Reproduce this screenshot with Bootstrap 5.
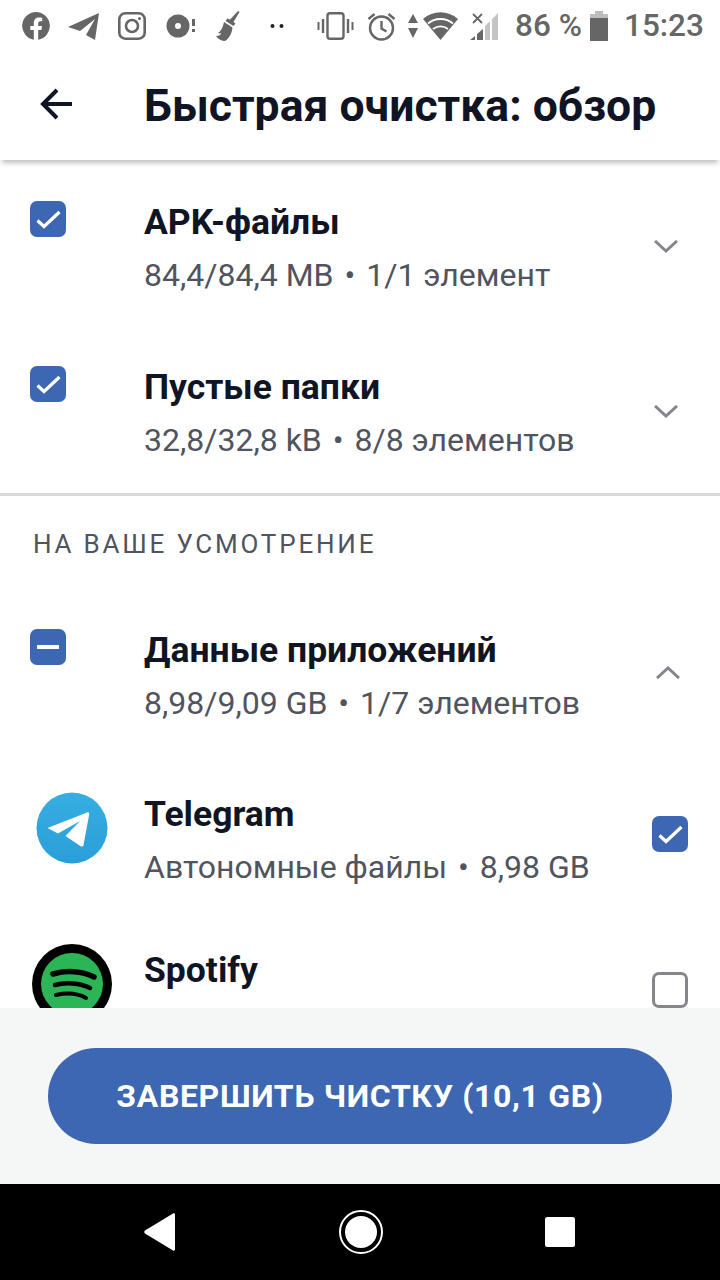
<!DOCTYPE html>
<html lang="ru">
<head>
  <meta charset="UTF-8" />
  <meta name="viewport" content="width=device-width, initial-scale=1.0"/>
  <title>Быстрая очистка: обзор</title>
  <link href="https://cdn.jsdelivr.net/npm/bootstrap@5.3.2/dist/css/bootstrap.min.css" rel="stylesheet" />
  <style>
    html, body { margin: 0; height: 1280px; overflow: hidden; }
    body { background: #fff; font-family: Roboto, "Liberation Sans", sans-serif; color: #0f1524; }
    .phone { width: 720px; height: 1280px; }
    .status-bar { height: 52px; color: #666; font-size: 31.5px; font-weight: 500; line-height: 52px; flex: none; }
    .status-bar svg { flex: none; }
    .si-fb { margin-left: 22px; } .si-tg { margin-left: 18px; } .si-ig { margin-left: 18px; }
    .si-disc { margin-left: 20px; } .si-broom { margin-left: 20px; } .si-dots { margin-left: 30px; }
    .si-vib { margin-left: 33px; } .si-alarm { margin-left: 13px; } .si-ud { margin-left: 12px; }
    .si-wifi { margin-left: 5px; } .si-sig { margin-left: 12px; } .si-pct { margin-left: 17px; width: 66px; white-space: nowrap; }
    .si-bat { margin-left: 9px; } .si-time { margin-left: 16px; }
    .app-head { height: 108px; box-shadow: 0 5px 5px -2px rgba(0,0,0,.25); position: relative; z-index: 2; flex: none; }
    .back-icon { margin-left: 40px; margin-right: 72px; margin-bottom: 5px; }
    .head-title { font-size: 44.5px; font-weight: 700; line-height: 1; margin: 0; color: #0f1524; }
    .scroll-area { flex: 1 1 auto; overflow: hidden; min-height: 0; }
    .clean-row { height: 164px; padding-left: 30px; }
    .clean-row.first-row { height: 165px; }
    .clean-row.last-row { height: 168px; }
    .app-row { height: 156px; padding-left: 30px; }
    .chk { width: 36px; height: 36px; border-radius: 7px; flex: none; background: #3d66b3; display: flex; align-items: center; justify-content: center; }
    .chk-empty { background: #fff; border: 3px solid #85868d; }
    .chk-slot { width: 114px; flex: none; padding-top: 41px; }
    .txt-col { flex: 1 1 auto; min-width: 0; padding-top: 42px; }
    .item-name { font-size: 35.5px; font-weight: 700; line-height: 40px; }
    .item-sub { font-size: 32px; line-height: 40px; margin-top: 13px; color: #50545e; white-space: nowrap; }
    .dot-sep { margin: 0 3px; }
    .end-slot { width: 72px; flex: none; padding: 80px 0 0 6px; }
    .end-slot.is-open { padding: 78px 0 0 8px; }
    .end-slot svg { display: block; }
    .end-box { width: 72px; flex: none; padding: 64px 0 0 4px; }
    .divider-line { height: 3px; background: #d9d9db; }
    .sec-label { font-size: 26px; letter-spacing: 2.8px; color: #50545e; padding: 33px 0 0 33px; height: 92px; line-height: 30px; }
    .app-icon-slot { width: 114px; flex: none; }
    .app-icon-slot svg { display: block; }
    .tg-slot { padding: 40px 0 0 6px; }
    .sp-slot { padding: 36px 0 0 2px; }
    .foot-bar { height: 176px; background: #f5f6f6; flex: none; padding: 40px 48px; }
    .finish-btn { width: 624px; height: 96px; border-radius: 48px; background: #3d66b3; border: 0; color: #fff; font-size: 32px; font-weight: 700; letter-spacing: .66px; }
    .finish-btn:hover { background: #3d66b3; color: #fff; }
    .nav-bar { height: 96px; background: #000; flex: none; padding-left: 144px; padding-right: 145px; }
  </style>
</head>
<body>
  <div class="phone d-flex flex-column">
    <div class="status-bar d-flex align-items-center">
      <svg class="si-fb" width="28" height="28" viewBox="0 0 28 28"><path fill="#666" d="M14 0a14 14 0 0 0-2.200 27.800V18H8.300v-4h3.500v-3.100c0-3.500 2.100-5.400 5.300-5.400 1.500 0 3.100.3 3.100.3v3.400h-1.800c-1.700 0-2.200 1.100-2.200 2.200V14h3.800l-.6 4h-3.200v9.800A14 14 0 0 0 14 0z"/></svg>
      <svg class="si-tg" width="32" height="28" viewBox="0 0 32 28"><path fill="#666" d="M0 15 31 1l-4 27-9-5 9-16-15 12z"/></svg>
      <svg class="si-ig" width="28" height="28" viewBox="0 0 28 28" fill="none" stroke="#666" stroke-width="2.600"><rect x="1.300" y="1.300" width="25.400" height="25.400" rx="6"/><circle cx="14" cy="14" r="6"/><circle cx="21.500" cy="6.500" r="1.500" fill="#666" stroke="none"/></svg>
      <svg class="si-disc" width="30" height="24" viewBox="0 0 30 24"><circle cx="12" cy="12" r="11.500" fill="#666"/><circle cx="12" cy="12" r="3" fill="#fff"/><path fill="#666" d="M26 5h3v7h-3zM26 15h3v3h-3z"/></svg>
      <svg class="si-broom" width="24" height="30" viewBox="0 0 24 30"><path fill="#666" d="M22 0l1.500 1-6 10 2 1.500-2 2.500-8-5 2-2.500 2.500 1zM8 11l8.500 5.500C16 22 13 28 9 30c-3 0-7-1.500-9-5 3 0 5-1 5-3-1 .5-2 .5-3 0 3-2 5-6 6-11z"/></svg>
      <svg class="si-dots" width="14" height="6" viewBox="0 0 14 6"><circle cx="2.500" cy="3" r="2" fill="#222"/><circle cx="11.500" cy="3" r="2" fill="#222"/></svg>
      <svg class="si-vib" width="37" height="28" viewBox="0 0 37 28" fill="none" stroke="#666"><rect x="10.500" y="1.200" width="16" height="25.600" rx="2.500" stroke-width="2.400"/><path stroke-width="2.400" d="M6 7v14M31 7v14"/><path stroke-width="2" d="M1.500 10v8M35.500 10v8"/></svg>
      <svg class="si-alarm" width="29" height="29" viewBox="0 0 29 29" fill="none" stroke="#666" stroke-width="2.400"><circle cx="14.500" cy="16" r="11.500"/><path d="M14.500 9v7.500l5 3M1.500 7l6-5M27.500 7l-6-5"/></svg>
      <svg class="si-ud" width="10" height="24" viewBox="0 0 10 24"><path fill="#666" d="M5 0l5 9H0zM5 24l5-10H0z"/></svg>
      <svg class="si-wifi" width="35" height="28" viewBox="0 0 35 28"><path fill="#666" d="M17.500 28 0 7c10-9 25-9 35 0z"/><path stroke="#fff" stroke-width="1.800" fill="none" d="M5 11.500c7-6 18-6 25 0M10 17c4.500-3.500 10.500-3.500 15 0"/></svg>
      <svg class="si-sig" width="28" height="28" viewBox="0 0 28 28"><path fill="#c4c4c4" d="M28 1v27h-6V7zM20 9v19h-5V14z"/><path fill="#666" d="M13 17v11H7v-6zM5 24v4H0z"/><path stroke="#666" stroke-width="1.800" d="M3 2l9 9M12 2l-9 9"/></svg>
      <span class="si-pct">86 %</span>
      <svg class="si-bat" width="18" height="30" viewBox="0 0 18 30"><path fill="#bdbdbd" d="M5 0h8v3h5v4H0V3h5z"/><path fill="#666" d="M0 7h18v23H0z"/></svg>
      <span class="si-time">15:23</span>
    </div>

    <div class="app-head d-flex align-items-center bg-white">
      <svg class="back-icon" width="32" height="32" viewBox="0 0 32 32" fill="none" stroke="#0f1524" stroke-width="4"><path d="M32 16H3M17 2 3 16l14 14"/></svg>
      <h1 class="head-title">Быстрая очистка: обзор</h1>
    </div>

    <div class="scroll-area" id="scroll-list"></div>

    <div class="foot-bar">
      <button type="button" class="btn finish-btn d-flex align-items-center justify-content-center">ЗАВЕРШИТЬ ЧИСТКУ (10,1 GB)</button>
    </div>

    <div class="nav-bar d-flex align-items-center justify-content-between">
      <svg width="32" height="38" viewBox="0 0 32 38"><path fill="#fff" d="M31 1.500V36.500c0 1-1 1.500-2 1L1 20.500c-1-.6-1-2.400 0-3L29 .5c1-.5 2 0 2 1z"/></svg>
      <svg width="44" height="44" viewBox="0 0 44 44"><circle cx="22" cy="22" r="21" fill="none" stroke="#fff" stroke-width="2"/><circle cx="22" cy="22" r="16" fill="#fff"/></svg>
      <svg width="30" height="30" viewBox="0 0 30 30"><rect width="30" height="30" rx="2.500" fill="#fff"/></svg>
    </div>
  </div>

  <script>
    const tick = '<svg width="25" height="20" viewBox="0 0 25 20" fill="none" stroke="#fff" stroke-width="3.200"><path d="M1.500 11.500 8 17.500 23.500 3"/></svg>';
    const minus = '<svg width="24" height="6" viewBox="0 0 24 6"><rect x="1" y="1" width="22" height="4" fill="#fff"/></svg>';
    const chevron = up => `<svg width="24" height="13" viewBox="0 0 24 13" fill="none" stroke="#85868d" stroke-width="3"><path d="${up ? 'M1 12 12 2l11 10' : 'M1 1l11 10L23 1'}"/></svg>`;
    const sub = (a, b) => `${a}<span class="dot-sep"> • </span>${b}`;
    const groupRow = (name, subText, box, up, cls) => `
      <div class="clean-row d-flex ${cls}">
        <div class="chk-slot"><div class="chk">${box}</div></div>
        <div class="txt-col"><div class="item-name">${name}</div><div class="item-sub">${subText}</div></div>
        <div class="end-slot ${up ? "is-open" : ""}">${chevron(up)}</div>
      </div>`;
    const telegramIcon = '<svg width="72" height="72" viewBox="0 0 72 72"><defs><linearGradient id="tgg" x1="0" y1="0" x2="0" y2="1"><stop offset="0" stop-color="#37aee2"/><stop offset="1" stop-color="#2a9ed8"/></linearGradient></defs><circle cx="36" cy="36" r="35.500" fill="url(#tgg)"/><path fill="#fff" d="M11.500 36 51 20.500c1.500-.5 2.500.3 2.200 2L47.500 53c-.3 1.500-1.500 2-2.800 1.200L29.500 44 44 29 22 41.500z"/></svg>';
    const spotifyIcon = '<svg width="80" height="80" viewBox="0 0 80 80" fill="none" stroke="#000" stroke-linecap="round"><circle cx="40" cy="40" r="40" fill="#000" stroke="none"/><circle cx="40" cy="40" r="31" fill="#2bb556" stroke="none"/><path stroke-width="5.500" d="M21 30c13-4 29-3 41 3"/><path stroke-width="4.500" d="M23 41c11-3 25-2 35 3"/><path stroke-width="4" d="M24 51c9-2 21-2 30 3"/></svg>';

    let html = groupRow("APK-файлы", sub("84,4/84,4 MB", "1/1 элемент"), tick, false, "first-row");
    html += groupRow("Пустые папки", sub("32,8/32,8 kB", "8/8 элементов"), tick, false, "last-row");
    html += '<div class="divider-line"></div>';
    html += '<div class="sec-label">НА ВАШЕ УСМОТРЕНИЕ</div>';
    html += groupRow("Данные приложений", sub("8,98/9,09 GB", "1/7 элементов"), minus, true, "");
    html += `<div class="app-row d-flex">
        <div class="app-icon-slot tg-slot">${telegramIcon}</div>
        <div class="txt-col"><div class="item-name">Telegram</div><div class="item-sub">${sub("Автономные файлы", "8,98 GB")}</div></div>
        <div class="end-box"><div class="chk">${tick}</div></div>
      </div>`;
    html += `<div class="app-row d-flex">
        <div class="app-icon-slot sp-slot">${spotifyIcon}</div>
        <div class="txt-col"><div class="item-name">Spotify</div></div>
        <div class="end-box"><div class="chk chk-empty"></div></div>
      </div>`;
    document.getElementById("scroll-list").innerHTML = html;
  </script>
  <script src="https://cdn.jsdelivr.net/npm/bootstrap@5.3.2/dist/js/bootstrap.bundle.min.js"></script>
</body>
</html>
